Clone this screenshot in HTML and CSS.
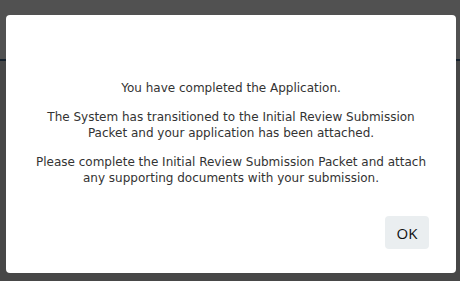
FILE: index.html
```html
<!DOCTYPE html>
<html>
<head>
<meta charset="utf-8">
<link rel="stylesheet" href="styles.css">
</head>
<body>
<div class="page">
  <div class="header"></div>
  <div class="rule"></div>
  <div class="content"></div>
</div>
<div class="modal">
  <div class="message">
    <p>You have completed the Application.</p>
    <p>The System has transitioned to the Initial Review Submission<br>Packet and your application has been attached.</p>
    <p>Please complete the Initial Review Submission Packet and attach<br>any supporting documents with your submission.</p>
  </div>
  <div class="actions">
    <button class="ok">OK</button>
  </div>
</div>
</body>
</html>
```
FILE: styles.css
```css
html, body {
  margin: 0;
  padding: 0;
  height: 100%;
  overflow: hidden;
}
body {
  background: #474747;
}
.page {
  display: flex;
  flex-direction: column;
  height: 100%;
}
.header {
  height: 59px;
  background: #515151;
}
.rule {
  height: 2px;
  background: #14202c;
}
.content {
  flex: 1;
  background: #474747;
}
.modal {
  position: absolute;
  left: 6px;
  top: 15px;
  width: 450px;
  height: 258px;
  box-sizing: border-box;
  background: #ffffff;
  border-radius: 4px;
  padding: 65px 20px 24px 20px;
  display: flex;
  flex-direction: column;
}
.message {
  font-family: "DejaVu Sans", sans-serif;
  font-size: 12px;
  line-height: 16px;
  color: #333333;
  text-align: center;
  flex: 1;
}
.message p {
  margin: 0 0 13px 0;
}
.actions {
  display: flex;
  justify-content: flex-end;
  padding-right: 7px;
}
.ok {
  font-family: "Open Sans", "Liberation Sans", sans-serif;
  font-size: 15px;
  color: #111111;
  background: #eaeef0;
  border: none;
  border-radius: 4px;
  width: 44px;
  height: 33px;
  padding: 0;
}
```
